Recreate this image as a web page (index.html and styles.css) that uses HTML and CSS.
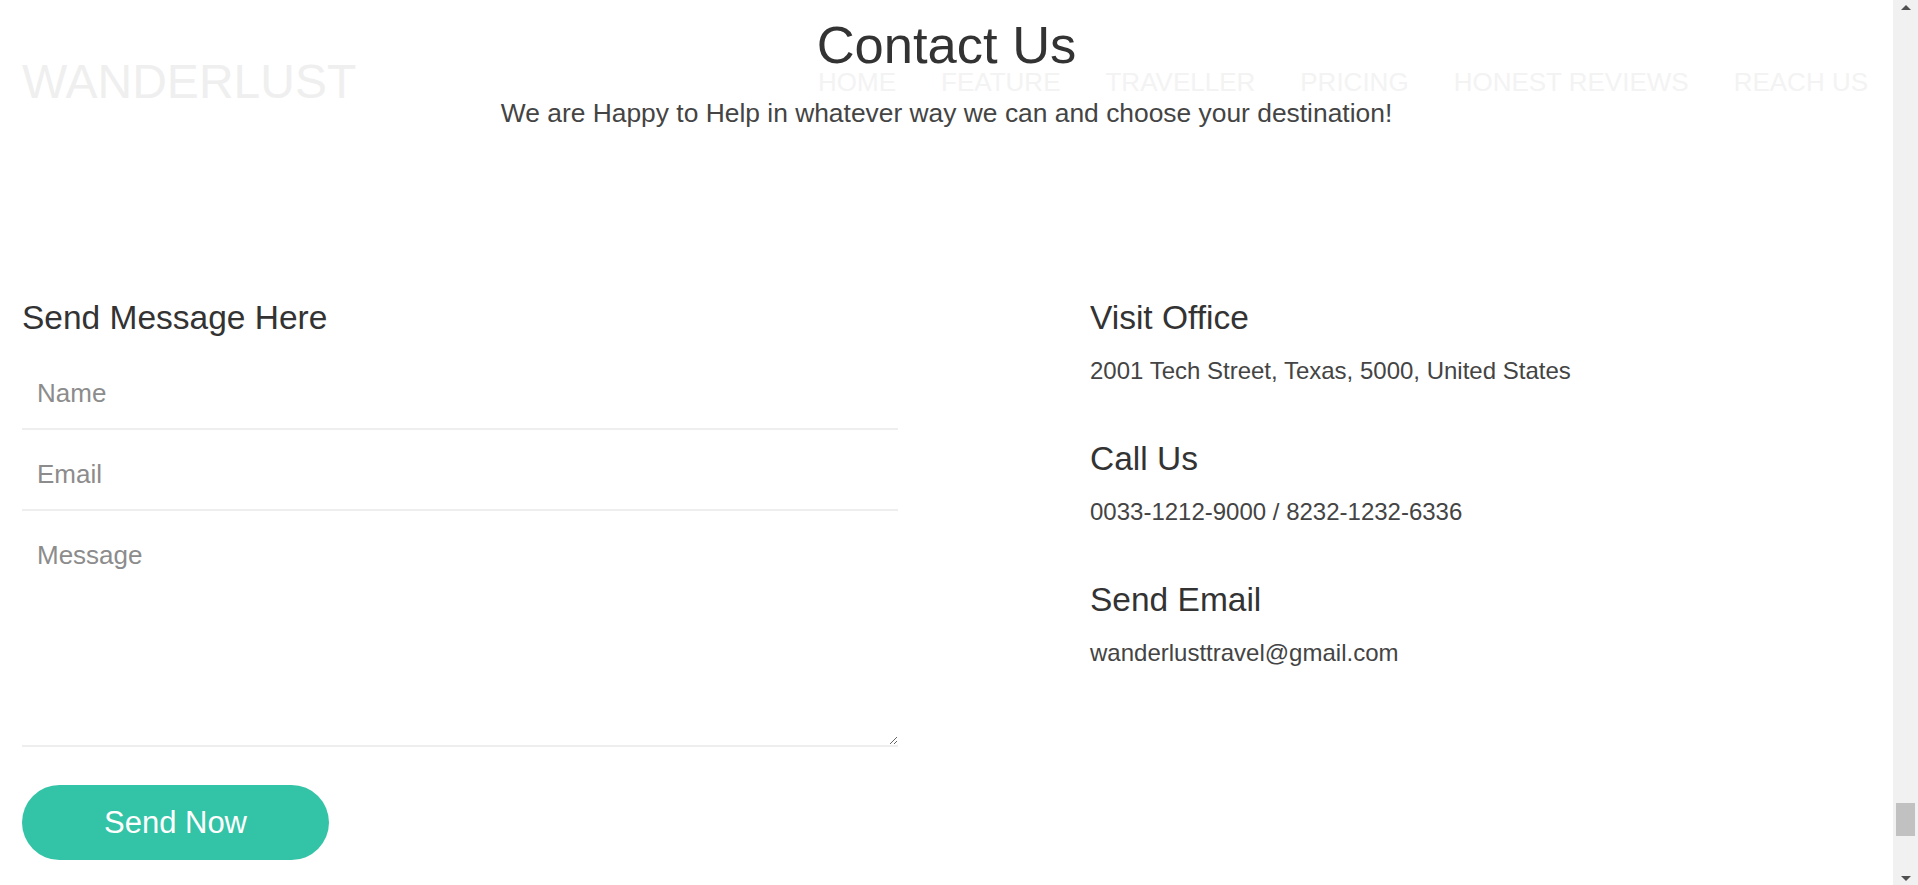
FILE: index.html
```html
<!DOCTYPE html>
<html lang="en">
<head>
<meta charset="utf-8">
<title>Wanderlust - Contact Us</title>
<link rel="stylesheet" href="styles.css">
</head>
<body>
<div class="page">
  <header class="topbar">
    <div class="logo">WANDERLUST</div>
    <nav>
      <ul class="menu">
        <li>HOME</li>
        <li>FEATURE</li>
        <li>TRAVELLER</li>
        <li>PRICING</li>
        <li>HONEST REVIEWS</li>
        <li>REACH US</li>
      </ul>
    </nav>
  </header>

  <section class="contact">
    <h1 class="title">Contact Us</h1>
    <p class="subtitle">We are Happy to Help in whatever way we can and choose your destination!</p>

    <div class="columns">
      <form class="form">
        <h2 class="col-heading">Send Message Here</h2>
        <input class="field" type="text" placeholder="Name">
        <input class="field" type="email" placeholder="Email">
        <textarea class="field area" placeholder="Message"></textarea>
        <button class="send" type="button">Send Now</button>
      </form>

      <div class="info">
        <h3 class="col-heading">Visit Office</h3>
        <p class="info-text">2001 Tech Street, Texas, 5000, United States</p>
        <h3 class="col-heading">Call Us</h3>
        <p class="info-text">0033-1212-9000 / 8232-1232-6336</p>
        <h3 class="col-heading">Send Email</h3>
        <p class="info-text">wanderlusttravel@gmail.com</p>
      </div>
    </div>
  </section>
</div>

<div class="scrollbar">
  <div class="sb-btn"><span class="arrow-up"></span></div>
  <div class="sb-track"><div class="sb-thumb"></div></div>
  <div class="sb-btn"><span class="arrow-down"></span></div>
</div>
</body>
</html>
```

FILE: styles.css
```css
* {
  box-sizing: border-box;
}

html, body {
  margin: 0;
  height: 885px;
  overflow: hidden;
  background: #ffffff;
}

body {
  display: flex;
  font-family: "Liberation Sans", Arial, sans-serif;
}

.page {
  flex: 1;
  position: relative;
  height: 885px;
}

/* overlay navigation (fixed header of the page) */
.topbar {
  position: absolute;
  top: 0;
  left: 0;
  right: 0;
  display: flex;
  align-items: center;
  padding: 54px 25px 0 22px;
  z-index: 0;
}

.logo {
  font-size: 48px;
  line-height: 56px;
  color: #efefef;
}

.topbar nav {
  margin-left: auto;
}

.menu {
  display: flex;
  gap: 45px;
  list-style: none;
  margin: 0;
  padding: 0;
}

.menu li {
  font-size: 26px;
  line-height: 30px;
  color: #f3f3f3;
}

/* contact section */
.contact {
  position: relative;
  z-index: 1;
  padding: 15px 22px 0;
}

.title {
  margin: 0;
  text-align: center;
  font-size: 52.5px;
  line-height: 60px;
  font-weight: normal;
  color: #333333;
}

.subtitle {
  margin: 23px 0 0;
  text-align: center;
  font-size: 26.4px;
  line-height: 30px;
  color: #444444;
}

.columns {
  display: grid;
  grid-template-columns: 876px 1fr;
  column-gap: 192px;
  margin-top: 171px;
}

.col-heading {
  margin: 0;
  font-size: 33.5px;
  line-height: 38px;
  font-weight: normal;
  color: #333333;
}

.form .col-heading {
  margin-bottom: 12px;
}

.field {
  display: block;
  width: 100%;
  height: 81px;
  margin: 0;
  padding: 29px 15px 20px;
  border: none;
  border-bottom: 2px solid #eeeeee;
  outline: none;
  background: transparent;
  font-family: "Liberation Sans", Arial, sans-serif;
  font-size: 26px;
  line-height: 30px;
  color: #333333;
}

.field::placeholder {
  color: #8c8c8c;
}

.area {
  height: 236px;
  resize: vertical;
}

.send {
  display: block;
  width: 307px;
  height: 75px;
  margin-top: 38px;
  border: none;
  border-radius: 38px;
  background: #33c3a6;
  color: #ffffff;
  font-family: "Liberation Sans", Arial, sans-serif;
  font-size: 31px;
  line-height: 36px;
  padding: 0;
  cursor: pointer;
}

.info .col-heading {
  margin-bottom: 20px;
}

.info-text {
  margin: 0 0 55px;
  font-size: 24px;
  line-height: 28px;
  color: #444444;
}

/* scrollbar */
.scrollbar {
  width: 25px;
  height: 885px;
  background: #f1f1f1;
  display: flex;
  flex-direction: column;
}

.sb-btn {
  height: 14px;
  display: flex;
  align-items: center;
  justify-content: center;
}

.arrow-up {
  width: 0;
  height: 0;
  border-left: 5px solid transparent;
  border-right: 5px solid transparent;
  border-bottom: 5px solid #505050;
}

.arrow-down {
  width: 0;
  height: 0;
  border-left: 5px solid transparent;
  border-right: 5px solid transparent;
  border-top: 5px solid #505050;
}

.sb-track {
  flex: 1;
  display: flex;
  flex-direction: column;
  justify-content: flex-end;
  align-items: center;
  padding-bottom: 35px;
}

.sb-thumb {
  width: 19px;
  height: 33px;
  background: #c1c1c1;
}
```
